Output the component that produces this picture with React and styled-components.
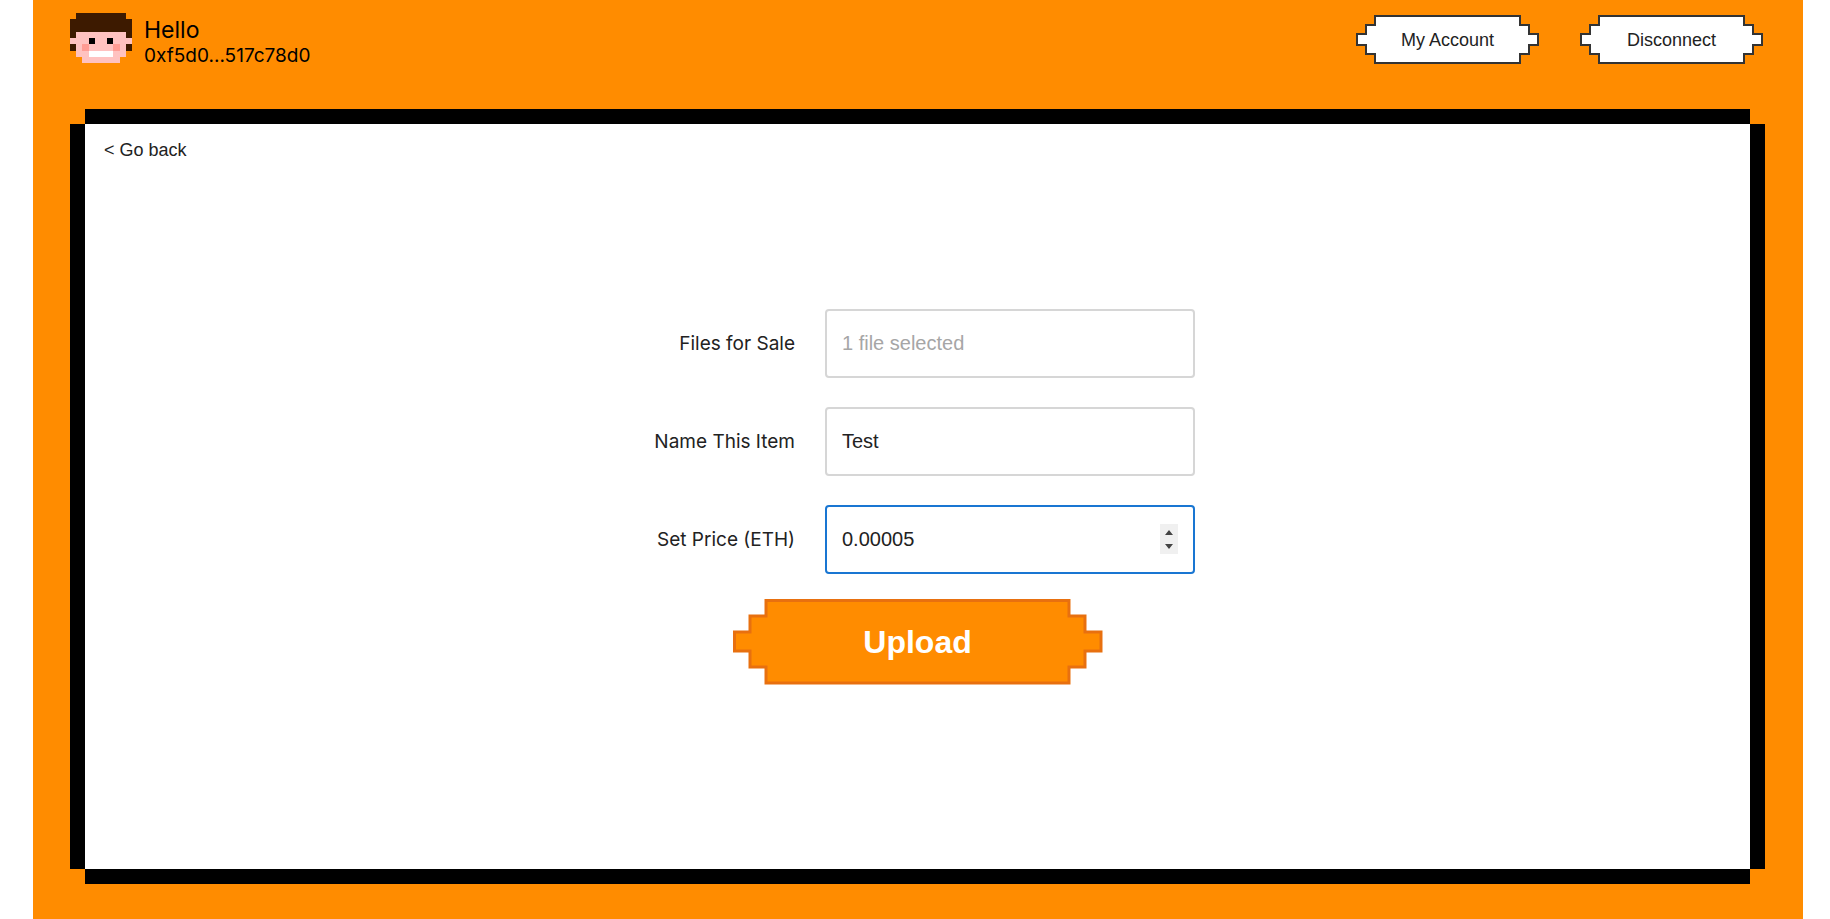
import React, { useState } from "react";
import styled, { createGlobalStyle, css } from "styled-components";

const colors = {
  orange: "#ff8c00",
  orangeDark: "#e8700f",
  ink: "#222",
  border: "#d6d6d6",
  focus: "#1976d2",
};

const fonts = {
  label: 'Inter, "Liberation Sans", sans-serif',
  control: '"Liberation Sans", Arial, sans-serif',
};

const GlobalStyle = createGlobalStyle`
  *, *::before, *::after { box-sizing: border-box; }
  body {
    margin: 0;
    background: #fff;
    color: ${colors.ink};
    font-family: ${fonts.label};
  }
`;

const Page = styled.div`
  display: flex;
  min-height: 100vh;
  padding: 0 27px 0 33px;
`;

const Shell = styled.div`
  display: flex;
  flex: 1;
  flex-direction: column;
  gap: 60px;
  padding: 13px 38px 50px 37px;
  background: ${colors.orange};
`;

const Header = styled.header`
  display: flex;
  align-items: flex-start;
  justify-content: space-between;
  height: 51px;
  padding-right: 2px;
`;

const Profile = styled.div`
  display: flex;
  gap: 12px;
`;

const Avatar = styled.svg`
  display: block;
  width: 62px;
  height: 50px;
`;

const Identity = styled.div`
  display: flex;
  flex-direction: column;
  padding-top: 4px;
  color: #000;
`;

const Greeting = styled.span`
  font-size: 23px;
  line-height: 26px;
`;

const Address = styled.span`
  font-size: 19px;
  line-height: 26px;
`;

const Actions = styled.nav`
  display: flex;
  gap: 41px;
  padding-top: 2px;
`;

const stepped = css`
  clip-path: polygon(
    0 calc(var(--step) * 2),
    var(--step) calc(var(--step) * 2),
    var(--step) var(--step),
    calc(var(--step) * 2) var(--step),
    calc(var(--step) * 2) 0,
    calc(100% - var(--step) * 2) 0,
    calc(100% - var(--step) * 2) var(--step),
    calc(100% - var(--step)) var(--step),
    calc(100% - var(--step)) calc(var(--step) * 2),
    100% calc(var(--step) * 2),
    100% calc(100% - var(--step) * 2),
    calc(100% - var(--step)) calc(100% - var(--step) * 2),
    calc(100% - var(--step)) calc(100% - var(--step)),
    calc(100% - var(--step) * 2) calc(100% - var(--step)),
    calc(100% - var(--step) * 2) 100%,
    calc(var(--step) * 2) 100%,
    calc(var(--step) * 2) calc(100% - var(--step)),
    var(--step) calc(100% - var(--step)),
    var(--step) calc(100% - var(--step) * 2),
    0 calc(100% - var(--step) * 2)
  );
`;

const PixelButtonFrame = styled.button`
  --step: ${(p) => (p.$primary ? 16 : 9)}px;
  display: flex;
  width: ${(p) => (p.$primary ? 370 : 183)}px;
  height: ${(p) => (p.$primary ? 86 : 49)}px;
  padding: ${(p) => (p.$primary ? 3 : 2)}px;
  border: 0;
  background: ${(p) => (p.$primary ? colors.orangeDark : "#333")};
  color: ${(p) => (p.$primary ? "#fff" : colors.ink)};
  font-family: ${fonts.control};
  font-size: ${(p) => (p.$primary ? 32 : 18)}px;
  font-weight: ${(p) => (p.$primary ? 700 : 400)};
  cursor: pointer;
  ${stepped}
`;

const PixelButtonFace = styled.span`
  display: flex;
  flex: 1;
  align-self: stretch;
  align-items: center;
  justify-content: center;
  padding-top: 2px;
  background: ${(p) => (p.$primary ? colors.orange : "#fff")};
  ${stepped}
`;

function PixelButton({ primary, children, ...rest }) {
  return (
    <PixelButtonFrame $primary={primary} {...rest}>
      <PixelButtonFace $primary={primary}>{children}</PixelButtonFace>
    </PixelButtonFrame>
  );
}

const Panel = styled.main`
  display: grid;
  flex: 1;
  grid-template-rows: 1fr auto 1fr;
  justify-items: center;
  margin: 0 15px;
  background: #fff;
  box-shadow: 15px 0 #000, -15px 0 #000, 0 15px #000, 0 -15px #000;
`;

const BackLink = styled.a`
  justify-self: start;
  align-self: start;
  padding: 15px 19px;
  color: ${colors.ink};
  font-family: ${fonts.control};
  font-size: 18px;
  line-height: 22px;
  text-decoration: none;
`;

const Form = styled.form`
  display: flex;
  flex-direction: column;
  align-items: center;
  gap: 25px;
`;

const Fields = styled.div`
  display: grid;
  grid-template-columns: 155px 370px;
  align-items: center;
  gap: 29px 30px;
`;

const Label = styled.label`
  padding-top: 2px;
  font-size: 19px;
  line-height: 24px;
  text-align: right;
`;

const spinnerArrows = encodeURIComponent(
  `<svg xmlns="http://www.w3.org/2000/svg" viewBox="0 0 18 30"><rect width="18" height="30" fill="#f0f0f0"/><path d="M5 11L9 6l4 5zM5 20l4 5 4-5z" fill="#444"/></svg>`
);

const Input = styled.input`
  width: 100%;
  height: 69px;
  padding: 0 15px;
  border: 2px solid ${colors.border};
  border-radius: 4px;
  outline: none;
  background: #fff;
  color: ${colors.ink};
  font-family: ${fonts.control};
  font-size: 20px;

  &::placeholder { color: #a6a6a6; opacity: 1; }
  &:focus { border-color: ${colors.focus}; }
  &::-webkit-inner-spin-button {
    -webkit-appearance: none;
    width: 18px;
    height: 30px;
    opacity: 1;
    background: url("data:image/svg+xml,${spinnerArrows}") center / 18px 30px no-repeat;
  }
`;

const AVATAR_ROWS = [
  ".hhhhhhhh.",
  "hhhhhhhhhh",
  "hhhhhhhhhh",
  "hssssssssh",
  "ssskssksss",
  "hscsssscsh",
  ".sswwwwss.",
  "..ssssss..",
];
const AVATAR_COLORS = {
  h: "#3d1a00",
  s: "#ffc2c0",
  k: "#000",
  c: "#ff9c94",
  w: "#fff",
};

function PixelFace() {
  return (
    <Avatar viewBox="0 0 10 8" preserveAspectRatio="none" shapeRendering="crispEdges" aria-hidden="true">
      {AVATAR_ROWS.flatMap((row, y) =>
        [...row].map((cell, x) =>
          cell === "." ? null : (
            <rect key={`${x}-${y}`} x={x} y={y} width="1" height="1" fill={AVATAR_COLORS[cell]} />
          )
        )
      )}
    </Avatar>
  );
}

export default function App() {
  const [name, setName] = useState("Test");
  const [price, setPrice] = useState("0.00005");

  return (
    <>
      <GlobalStyle />
      <Page>
        <Shell>
          <Header>
            <Profile>
              <PixelFace />
              <Identity>
                <Greeting>Hello</Greeting>
                <Address>0xf5d0...517c78d0</Address>
              </Identity>
            </Profile>
            <Actions>
              <PixelButton type="button">My Account</PixelButton>
              <PixelButton type="button">Disconnect</PixelButton>
            </Actions>
          </Header>
          <Panel>
            <BackLink href="#">&lt; Go back</BackLink>
            <Form onSubmit={(e) => e.preventDefault()}>
              <Fields>
                <Label htmlFor="files">Files for Sale</Label>
                <Input id="files" type="text" placeholder="1 file selected" readOnly />
                <Label htmlFor="name">Name This Item</Label>
                <Input id="name" type="text" value={name} onChange={(e) => setName(e.target.value)} />
                <Label htmlFor="price">Set Price (ETH)</Label>
                <Input
                  id="price"
                  type="number"
                  step="any"
                  autoFocus
                  value={price}
                  onChange={(e) => setPrice(e.target.value)}
                />
              </Fields>
              <PixelButton primary type="submit">Upload</PixelButton>
            </Form>
          </Panel>
        </Shell>
      </Page>
    </>
  );
}
